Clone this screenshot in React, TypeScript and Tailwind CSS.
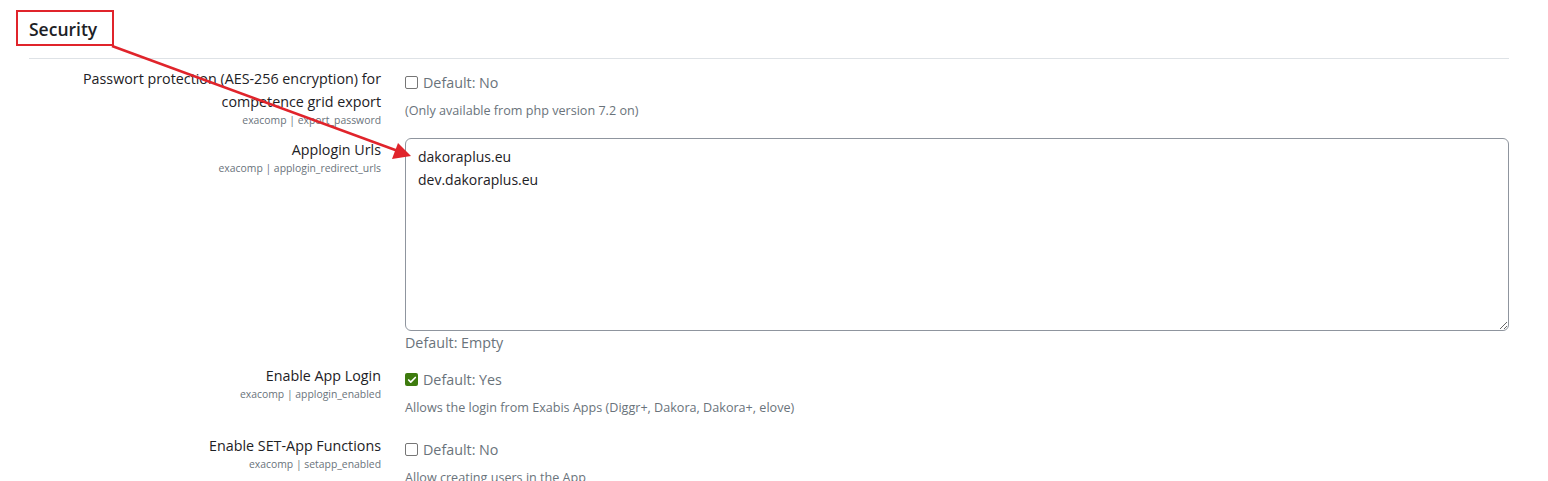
import { Check } from 'lucide-react';

const font = { fontFamily: '"Open Sans", "Noto Sans", sans-serif' };

const Label = ({ label, key_ }: { label: string[]; key_: string }) => (
  <div className="w-[352px] shrink-0 text-right">
    {label.map((l) => (
      <div key={l} className="text-[14.3px] leading-[23px] text-[#1d2125]">{l}</div>
    ))}
    <div className="text-[10.4px] leading-[14px] text-[#6a737b]">{key_}</div>
  </div>
);

const Box = ({ checked }: { checked?: boolean }) =>
  checked ? (
    <span className="w-[13px] h-[13px] rounded-[2px] bg-[#3e7b0e] flex items-center justify-center">
      <Check className="w-[10px] h-[10px] text-white" strokeWidth={4} />
    </span>
  ) : (
    <span className="w-[13px] h-[13px] rounded-[2px] border border-[#767676] bg-white" />
  );

const Default = ({ text, checked }: { text: string; checked?: boolean }) => (
  <div className="flex items-center gap-[5px] h-[23px] mt-[4px]">
    <Box checked={checked} />
    <span className="text-[14.3px] text-[#6a737b]">{text}</span>
  </div>
);

const Note = ({ children }: { children: string }) => (
  <div className="text-[12.6px] leading-[18px] text-[#6a737b] mt-[8px]">{children}</div>
);

export default function App() {
  return (
    <div className="relative bg-white w-[1548px] h-[481px] overflow-hidden" style={font}>
      <div className="pl-[29px] pr-[39px]">
        <div className="pt-[16px] pb-[16px]">
          <h3 className="text-[17.5px] font-semibold text-[#1d2125] leading-[26px]">Security</h3>
        </div>
        <div className="border-t border-[#dee2e6]" />

        <div className="flex gap-[24px] pt-[8px]">
          <Label label={['Passwort protection (AES-256 encryption) for', 'competence grid export']} key_="exacomp | export_password" />
          <div className="flex-1">
            <Default text="Default: No" />
            <Note>(Only available from php version 7.2 on)</Note>
          </div>
        </div>

        <div className="flex gap-[24px] mt-[11px]">
          <Label label={['Applogin Urls']} key_="exacomp | applogin_redirect_urls" />
          <div className="flex-1">
            <textarea
              readOnly
              className="block w-full h-[193px] border border-[#8f959e] rounded-[6px] px-[12px] py-[6px] text-[14px] leading-[23px] text-[#1d2125] resize-y outline-none"
              defaultValue={'dakoraplus.eu\ndev.dakoraplus.eu'}
            />
            <div className="text-[14.3px] text-[#6a737b] leading-[23px]">Default: Empty</div>
          </div>
        </div>

        <div className="flex gap-[24px] mt-[10px]">
          <Label label={['Enable App Login']} key_="exacomp | applogin_enabled" />
          <div className="flex-1">
            <Default text="Default: Yes" checked />
            <Note>Allows the login from Exabis Apps (Diggr+, Dakora, Dakora+, elove)</Note>
          </div>
        </div>

        <div className="flex gap-[24px] mt-[17px]">
          <Label label={['Enable SET-App Functions']} key_="exacomp | setapp_enabled" />
          <div className="flex-1">
            <Default text="Default: No" />
            <Note>Allow creating users in the App</Note>
          </div>
        </div>
      </div>

      {/* annotation */}
      <div className="absolute left-[16px] top-[10px] w-[98px] h-[36px] border-2 border-[#e0242b]" />
      <svg className="absolute left-0 top-0" width="1548" height="481">
        <line x1="112" y1="46" x2="398" y2="151" stroke="#e0242b" strokeWidth="2.5" />
        <polygon points="411,156 392,159 398,143" fill="#e0242b" />
      </svg>
    </div>
  );
}
